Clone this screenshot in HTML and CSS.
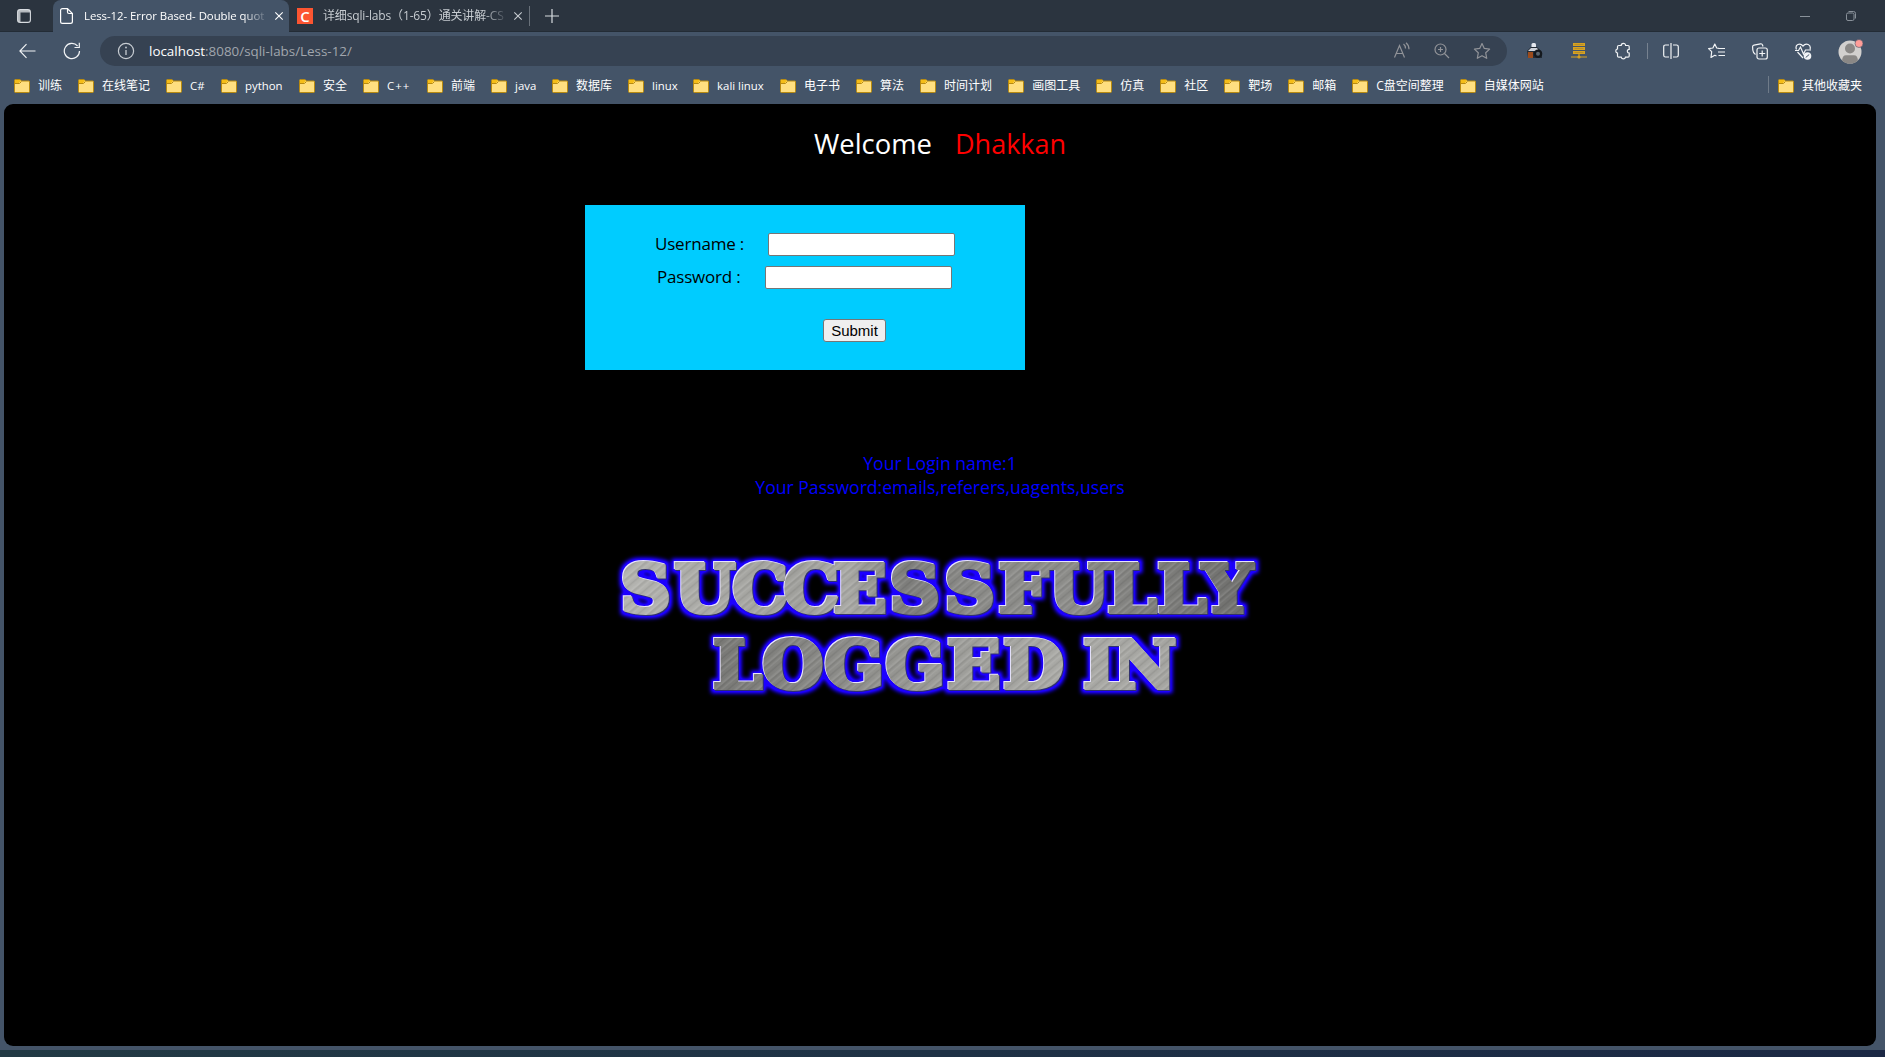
FILE: index.html
```html
<!DOCTYPE html>
<html lang="zh-CN">
<head>
<meta charset="utf-8">
<title>Less-12- Error Based- Double quotes</title>
<link rel="stylesheet" href="styles.css">
</head>
<body>
<svg width="0" height="0" class="defs">
  <symbol id="folder" viewBox="0 0 16 14"><path d="M.5 1.5Q.5.5 1.5.5H6l1.500 1.500H15q.5 0 .5.8V12.500q0 1-1 1H1.500q-1 0-1-1z" fill="#ffdf80" stroke="#b88a10"/><path d="M1 1h5l1 1-2 2H1z" fill="#f5bd18"/><path d="M1 4.500h4.500l2-2" fill="none" stroke="#b88a10"/></symbol>
  <symbol id="x" viewBox="0 0 10 10"><path d="M1.300 1.300l7.400 7.400M8.700 1.300L1.300 8.700" fill="none" stroke="currentColor" stroke-width="1.100"/></symbol>
</svg>
<div class="window">
  <header class="tabs">
    <div class="workspace"><svg width="14" height="14" viewBox="0 0 14 14"><rect x=".6" y=".6" width="12.800" height="12.800" rx="2.500" fill="none" stroke="#d8dce0" stroke-width="1.100"/><path d="M1 1h12v2.500H1zM1 3.500h2.500v9.500H1z" fill="#d8dce0" opacity=".8"/></svg></div>
    <div class="tab active">
      <svg class="page-icon" width="13" height="16" viewBox="0 0 13 16"><path d="M2.500.6H7.500L12.400 5.500V13.500q0 1.900-1.900 1.900H2.500Q.6 15.400.6 13.500V2.500Q.6.6 2.500.6zM7.500.6V4q0 1.500 1.500 1.500h3.400" fill="none" stroke="#fff" stroke-width="1.200"/></svg>
      <span class="tab-title">Less-12- Error Based- Double quot</span>
      <svg class="close" width="10" height="10"><use href="#x"/></svg>
    </div>
    <div class="tab second">
      <span class="favicon">C</span>
      <span class="tab-title">详细sqli-labs（1-65）通关讲解-CS</span>
      <svg class="close" width="10" height="10"><use href="#x"/></svg>
    </div>
    <svg class="plus" width="14" height="14" viewBox="0 0 14 14"><path d="M7 0v14M0 7h14" stroke="#d8dce0" stroke-width="1.200"/></svg>
    <div class="controls">
      <svg width="10" height="10" viewBox="0 0 10 10"><path d="M0 5.500h10" stroke="#89919a"/></svg>
      <svg width="10" height="10" viewBox="0 0 10 10"><rect x=".5" y="2" width="7.500" height="7.500" rx="1.500" fill="none" stroke="#89919a"/><path d="M2.500.5H7.500q2 0 2 2V7.500" fill="none" stroke="#89919a"/></svg>
    </div>
  </header>
  <div class="toolbar">
    <svg class="back" width="17" height="16" viewBox="0 0 17 16"><path d="M7.500 1.200L.9 8l6.600 6.800M1 8h15.500" fill="none" stroke="#f2f4f6" stroke-width="1.150"/></svg>
    <svg class="reload" width="18" height="18" viewBox="0 0 18 18"><path d="M16.500 9A7.600 7.600 0 1 1 14.600 4M16.300.8V5.500H11.500" fill="none" stroke="#f2f4f6" stroke-width="1.200"/></svg>
    <div class="address">
      <svg class="info" width="18" height="18" viewBox="0 0 18 18"><circle cx="9" cy="9" r="7.600" fill="none" stroke="#c8cdd3" stroke-width="1.200"/><path d="M9 8v5" stroke="#c8cdd3" stroke-width="1.300"/><circle cx="9" cy="5.500" r=".9" fill="#c8cdd3"/></svg>
      <div class="url"><b>localhost</b>:8080/sqli-labs/Less-12/</div>
      <div class="address-icons">
        <svg width="18" height="18" viewBox="0 0 18 18"><path d="M1.500 15.500L6.500 3.500l5 12M3.200 11.500h6.600M10.500 2q2 1.500 2 4.500M13 0.800q3 2.500 3 6.500" fill="none" stroke="#919398" stroke-width="1.200"/></svg>
        <svg width="18" height="18" viewBox="0 0 18 18"><circle cx="7.500" cy="7.500" r="5.500" fill="none" stroke="#919398" stroke-width="1.200"/><path d="M11.500 11.500l4.500 4.500M7.500 5v5M5 7.500h5" stroke="#919398" stroke-width="1.200"/></svg>
        <svg width="18" height="18" viewBox="0 0 18 18"><path d="M9 1.500l2.300 4.900 5.300.7-3.900 3.700 1 5.500L9 13.700l-4.700 2.600 1-5.500L1.400 7.100l5.300-.7z" fill="none" stroke="#919398" stroke-width="1.200" stroke-linejoin="round"/></svg>
      </div>
    </div>
    <svg class="i-camera" width="16" height="16" viewBox="0 0 16 16"><rect x="4.500" y="0" width="4.500" height="5" rx="1.500" fill="#e6e9ef"/><path d="M0 8l4-4h6l5 5v6H1z" fill="#222b35"/><path d="M1 8l3-3h6l2 3z" fill="#cdd1d8"/><path d="M1 9h5v6H1z" fill="#9b4b1c"/><circle cx="11" cy="10.800" r="4.300" fill="#15191e"/><circle cx="11" cy="10.800" r="2" fill="#59636d"/></svg>
    <svg class="i-server" width="16" height="16" viewBox="0 0 16 16"><path d="M2 0h12v3H2zM2 4h12v3H2zM2 8h12v3H2z" fill="#d9a21f"/><path d="M8 10v4M0 14h16" stroke="#d9a21f" stroke-width="1.200"/><circle cx="8" cy="14" r="1.600" fill="#d9a21f"/><path d="M3.500 1.500h9M3.500 5.500h9M3.500 9.500h9" stroke="#a8862f" stroke-width=".7"/></svg>
    <svg class="i-puzzle" width="18" height="18" viewBox="0 0 18 18"><path d="M4.500 3.500H7.200a2.200 2.200 0 0 1 4.400 0H14q1.200 0 1.200 1.200V7.300a1.900 1.900 0 0 0 0 3.800V14q0 1.200-1.200 1.200H11.500a2.200 2.200 0 0 1-4.300 0H4.700q-1.200 0-1.200-1.200v-2.900a2.200 2.200 0 0 1 0-4.300V4.700q0-1.200 1.200-1.200" fill="none" stroke="#f2f4f6" stroke-width="1.200"/></svg>
    <i class="bar"></i>
    <svg class="i-split" width="16" height="16" viewBox="0 0 16 16"><path d="M6 2H2.500Q.7 2 .7 3.800v8.400Q.7 14 2.500 14H6M10 2h3.500q1.800 0 1.800 1.800v8.400q0 1.800-1.800 1.800H10M8 0v16" fill="none" stroke="#f2f4f6" stroke-width="1.200"/></svg>
    <svg class="i-fav" width="17" height="16" viewBox="0 0 17 16"><path d="M11 5.300L8.700 5 6.800 1 4.900 5l-4.300.6 3.100 3.100L3 14.500l3.800-2.200L8.500 13M10.500 5.500H17M10 9h7M10.500 12.500H17" fill="none" stroke="#f2f4f6" stroke-width="1.200" stroke-linejoin="round"/></svg>
    <svg class="i-coll" width="16" height="17" viewBox="0 0 16 17"><path d="M3.500 11.500Q1 10 .8 7L.6 4Q.5 2.500 2 2.200L8.500.8q1.500-.3 2 1.200l.5 1.500" fill="none" stroke="#f2f4f6" stroke-width="1.200"/><rect x="5" y="5" width="10.300" height="11" rx="2" fill="none" stroke="#f2f4f6" stroke-width="1.200"/><path d="M10.200 7.500v6M7.200 10.500h6" stroke="#f2f4f6" stroke-width="1.200"/></svg>
    <svg class="i-heart" width="17" height="17" viewBox="0 0 17 17"><path d="M1.500 6.500C-.5 1.500 5-.5 8 3c3-3.500 8.500-1.500 7 3.500M2.500 9l5.500 6" fill="none" stroke="#f2f4f6" stroke-width="1.200"/><path d="M0 7.500h3.500L5.500 4l3 7 2-4H16" fill="none" stroke="#f2f4f6" stroke-width="1.200"/><circle cx="12.500" cy="13" r="3.800" fill="#f2f4f6"/><path d="M10.700 14.500l3.500-3" stroke="#445468"/></svg>
    <svg class="i-user" width="25" height="25" viewBox="0 0 25 25"><circle cx="12" cy="13" r="11.500" fill="#d2d0ce"/><circle cx="12" cy="9.500" r="5" fill="#8a8886"/><path d="M4 21.500Q4.500 16.200 8 16.200h8q3.500 0 4 5.300a11.500 11.500 0 0 1-16 0" fill="#8a8886"/><circle cx="21" cy="4.500" r="4" fill="#ff9d98" stroke="#445468" stroke-width=".6"/></svg>
  </div>
  <nav class="bookmarks">
    <span><svg><use href="#folder"/></svg><em>训练</em></span>
    <span><svg><use href="#folder"/></svg><em>在线笔记</em></span>
    <span><svg><use href="#folder"/></svg><em class="latin w15">C#</em></span>
    <span><svg><use href="#folder"/></svg><em class="latin w38">python</em></span>
    <span><svg><use href="#folder"/></svg><em>安全</em></span>
    <span><svg><use href="#folder"/></svg><em class="latin w24">C++</em></span>
    <span><svg><use href="#folder"/></svg><em>前端</em></span>
    <span><svg><use href="#folder"/></svg><em class="latin w21">java</em></span>
    <span><svg><use href="#folder"/></svg><em>数据库</em></span>
    <span><svg><use href="#folder"/></svg><em class="latin w25">linux</em></span>
    <span><svg><use href="#folder"/></svg><em class="latin w47">kali linux</em></span>
    <span><svg><use href="#folder"/></svg><em>电子书</em></span>
    <span><svg><use href="#folder"/></svg><em>算法</em></span>
    <span><svg><use href="#folder"/></svg><em>时间计划</em></span>
    <span><svg><use href="#folder"/></svg><em>画图工具</em></span>
    <span><svg><use href="#folder"/></svg><em>仿真</em></span>
    <span><svg><use href="#folder"/></svg><em>社区</em></span>
    <span><svg><use href="#folder"/></svg><em>靶场</em></span>
    <span><svg><use href="#folder"/></svg><em>邮箱</em></span>
    <span><svg><use href="#folder"/></svg><em>C盘空间整理</em></span>
    <span><svg><use href="#folder"/></svg><em>自媒体网站</em></span>
    <span class="other"><svg><use href="#folder"/></svg><em>其他收藏夹</em></span>
  </nav>
  <main>
    <h1><span>Welcome</span><span class="name">Dhakkan</span></h1>
    <form class="login">
      <div class="field user"><label for="u">Username :</label><input id="u" type="text"></div>
      <div class="field pass"><label for="p">Password :</label><input id="p" type="text"></div>
      <button type="button">Submit</button>
    </form>
    <div class="result">Your Login name:1<br>Your Password:emails,referers,uagents,users</div>
    <svg class="banner" width="680" height="170" viewBox="600 540 680 170">
      <defs>
        <linearGradient id="g1" gradientUnits="userSpaceOnUse" x1="0" y1="590" x2="600" y2="560"><stop offset="0" stop-color="#b4b4b0"/><stop offset=".28" stop-color="#a0a09c"/><stop offset=".36" stop-color="#a8a8a4"/><stop offset=".45" stop-color="#7c7c7a"/><stop offset=".56" stop-color="#8a8a87"/><stop offset=".7" stop-color="#8c8c89"/><stop offset="1" stop-color="#6c6c6a"/></linearGradient>
        <linearGradient id="g2" gradientUnits="userSpaceOnUse" x1="0" y1="650" x2="440" y2="690"><stop offset="0" stop-color="#777774"/><stop offset=".2" stop-color="#858582"/><stop offset=".45" stop-color="#999995"/><stop offset=".75" stop-color="#aaaaa6"/><stop offset="1" stop-color="#a4a4a0"/></linearGradient>
        <linearGradient id="scratch" gradientUnits="userSpaceOnUse" x1="0" y1="0" x2="9" y2="10" spreadMethod="repeat"><stop offset="0" stop-color="#fff" stop-opacity="0"/><stop offset=".2" stop-color="#fff" stop-opacity=".13"/><stop offset=".3" stop-color="#000" stop-opacity=".07"/><stop offset=".5" stop-color="#fff" stop-opacity=".1"/><stop offset=".6" stop-color="#fff" stop-opacity="0"/><stop offset=".8" stop-color="#000" stop-opacity=".09"/><stop offset="1" stop-color="#fff" stop-opacity="0"/></linearGradient>
        <pattern id="m1" patternUnits="userSpaceOnUse" x="-20" y="0" width="1300" height="720" viewBox="-20 0 1300 720"><rect x="-20" width="1300" height="720" fill="url(#g1)"/><rect x="-20" width="1300" height="720" fill="url(#scratch)"/></pattern>
        <pattern id="m2" patternUnits="userSpaceOnUse" x="-20" y="0" width="1300" height="720" viewBox="-20 0 1300 720"><rect x="-20" width="1300" height="720" fill="url(#g2)"/><rect x="-20" width="1300" height="720" fill="url(#scratch)"/></pattern>
        <filter id="steel" filterUnits="userSpaceOnUse" x="600" y="540" width="680" height="170" color-interpolation-filters="sRGB">
          <feMorphology in="SourceAlpha" operator="dilate" radius="3" result="wide"/>
          <feGaussianBlur in="wide" stdDeviation="2.200" result="soft"/>
          <feComponentTransfer in="soft" result="soft2"><feFuncA type="linear" slope="1.400"/></feComponentTransfer>
          <feFlood flood-color="#1c00ff"/><feComposite in2="soft2" operator="in" result="glow"/>
          <feOffset in="SourceAlpha" dx="-.7" dy="-.7" result="up"/><feFlood flood-color="#e8e4ff"/><feComposite in2="up" operator="in" result="light"/>
          <feOffset in="SourceAlpha" dx=".6" dy=".8" result="down"/><feFlood flood-color="#303070"/><feComposite in2="down" operator="in" result="dark"/>
          <feMerge><feMergeNode in="glow"/><feMergeNode in="dark"/><feMergeNode in="light"/><feMergeNode in="SourceGraphic"/></feMerge>
        </filter>
      </defs>
      <g filter="url(#steel)">
        <text class="steel" transform="translate(619.500 0) scale(1.060 1)" y="612.500" fill="url(#m1)" stroke="url(#m1)" x="1 51.9 106.6 154.7 201.9 254.7 306.6 357.5 404.7 460.4 507.5 550">SUCCESSFULLY</text>
        <text class="steel" transform="translate(713 0) scale(1.060 1)" y="688.500" fill="url(#m2)" stroke="url(#m2)" x="0 46.7 105.2 162.7 221 273.8 331 349.300 376.800">LOGGED IN</text>
      </g>
    </svg>
  </main>
</div>
<div class="desktop"></div>
</body>
</html>
```

FILE: styles.css
```css
* { box-sizing: border-box; }
body { margin: 0; height: 1057px; overflow: hidden; display: flex; flex-direction: column; font-family: "Open Sans", "Noto Sans CJK SC", sans-serif; background: #445468; }
svg { display: block; flex: none; }
.defs { position: absolute; }
.window { height: 1050px; background: #445468; display: flex; flex-direction: column; }
.desktop { height: 7px; background: linear-gradient(90deg, #223a44, #1e3145 50%, #1b2844); }

.tabs { height: 32px; flex: none; display: flex; align-items: center; background: #2b343f; box-shadow: inset 0 -1px #232c36; }
.workspace { width: 53px; height: 32px; padding: 9px 0 0 17px; }
.tab { display: flex; align-items: center; height: 32px; font-size: 11.4px; color: #fff; }
.tab.active { width: 236px; padding-left: 7px; background: #445468; border-radius: 8px 8px 0 0; }
.tab-title { white-space: nowrap; line-height: 20px; -webkit-mask-image: linear-gradient(90deg, #000 86%, transparent); mask-image: linear-gradient(90deg, #000 86%, transparent); }
.active .tab-title { width: 185px; margin-left: 11px; letter-spacing: -.05px; }
.active .close { margin-left: 5px; color: #fff; }
.second { width: 241px; padding-left: 8px; color: #c6cbd0; }
.second .tab-title { width: 186px; margin-left: 10px; font-size: 12px; letter-spacing: -.15px; }
.second .close { margin-left: 4px; }
.second { border-right: 1px solid #69717a; height: 20px; }
.favicon { width: 16px; height: 16px; background: #fc5531; color: #fff; font: 600 15px/16px "Open Sans", sans-serif; text-align: center; }
.plus { margin-left: 15px; }
.controls { margin-left: auto; display: flex; gap: 36px; padding-right: 29px; }

.toolbar { height: 38px; flex: none; display: flex; align-items: center; }
.back { margin-left: 19px; }
.reload { margin-left: 27px; }
.address { margin-left: 19px; width: 1407px; height: 30px; border-radius: 15px; background: #364252; display: flex; align-items: center; }
.info { margin-left: 17px; }
.url { margin-left: 14px; font-size: 13.4px; color: #a1a6ad; line-height: 20px; }
.url b { font-weight: 400; color: #fff; }
.address-icons { margin-left: auto; margin-right: 16px; display: flex; gap: 22px; }
.i-camera { margin-left: 20px; }
.i-server { margin-left: 28px; }
.i-puzzle { margin-left: 27px; }
.bar { width: 1px; height: 16px; background: #778290; margin-left: 15px; }
.i-split { margin-left: 15px; }
.i-fav { margin-left: 29px; }
.i-coll { margin-left: 27px; }
.i-heart { margin-left: 27px; }
.i-user { margin-left: 26px; }

.bookmarks { height: 34px; flex: none; display: flex; gap: 16px; padding: 0 23px 2px 14px; color: #fff; font-size: 12px; }
.bookmarks span { display: flex; align-items: center; gap: 8px; white-space: nowrap; }
.bookmarks svg { width: 16px; height: 14px; }
.bookmarks em { font-style: normal; line-height: 18px; }
.bookmarks .latin { font-size: 11.4px; }
.w15 { width: 15px; } .w38 { width: 38px; } .w24 { width: 24px; letter-spacing: 1px; }
.w21 { width: 21px; } .w25 { width: 25px; } .w47 { width: 47px; }
.bookmarks .other { margin-left: auto; position: relative; padding-left: 10px; }
.other::before { content: ""; position: absolute; left: 0; top: 6px; width: 1px; height: 17px; background: #6f7b89; }

main { margin: 0 9px 0 4px; height: 942px; flex: none; background: #000; border-radius: 9px; display: flex; flex-direction: column; }
h1 { margin: 20px 0 0 810px; height: 40px; display: flex; font-size: 27.4px; font-weight: 400; line-height: 40px; color: #fff; }
h1 span { width: 141px; }
h1 .name { color: #f00; font-size: 27px; }
.login { margin: 41px 0 0 581px; width: 440px; height: 165px; padding-top: 28px; background: #0cf; color: #000; font-size: 17px; }
.field { display: flex; align-items: center; height: 23px; }
.field + .field { margin-top: 10px; }
.user { padding-left: 70px; }
.pass { padding-left: 72px; }
label { white-space: nowrap; line-height: 22px; padding-bottom: 2px; letter-spacing: -.2px; }
.user label { width: 113px; }
.pass label { width: 108px; }
input { width: 187px; height: 23px; border: 1px solid #767676; border-radius: 2px; background: #fff; padding: 0; }
button { display: block; margin: 30px 0 0 238px; width: 63px; height: 23px; padding: 0; border: 1px solid #767676; border-radius: 3px; background: #efefef; color: #000; font: 15px/20px "Liberation Sans", sans-serif; }
.result { margin-top: 81px; font-size: 17.6px; line-height: 24px; text-align: center; color: #00f; }
.banner { margin: 41px 0 0 596px; }
.steel { font: bold 66px "DejaVu Serif", serif; stroke-width: 4px; }
```
